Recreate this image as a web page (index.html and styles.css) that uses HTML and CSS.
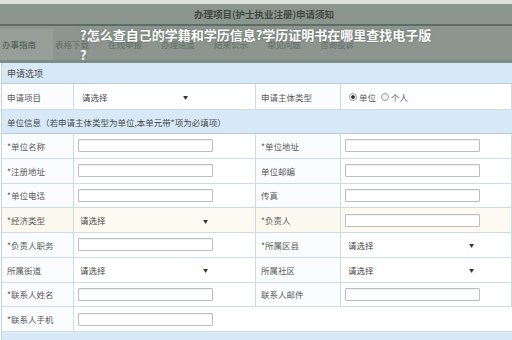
FILE: index.html
```html
<!DOCTYPE html>
<html lang="zh">

<head>
    <meta charset="UTF-8">
    <title>申请须知</title>
    <link rel="stylesheet" href="styles.css">
</head>

<body>
    <div class="page">
        <div class="top">
            <div class="top-strip"></div>
            <div class="top-title">办理项目(护士执业注册)申请须知</div>
            <div class="top-line"></div>
            <div class="tabs">
                <span class="tab tab-on">办事指南</span>
                <span class="tab">表格下载</span>
                <span class="tab">在线申报</span>
                <span class="tab">办理进度</span>
                <span class="tab">结果公示</span>
                <span class="tab">常见问题</span>
                <span class="tab">咨询投诉</span>
            </div>
            <div class="top-band"></div>
        </div>

        <h1 class="caption">?怎么查自己的学籍和学历信息?学历证明书在哪里查找电子版?</h1>

        <div class="form">
            <div class="section sec-1">申请选项</div>
            <div class="row row-tall">
                <div class="cell label">申请项目</div>
                <div class="cell"><div class="select select-s"><span>请选择</span><span class="arrow">▼</span></div></div>
                <div class="cell label">申请主体类型</div>
                <div class="cell radios">
                    <span class="radio radio-on"></span><span>单位</span>
                    <span class="radio"></span><span>个人</span>
                </div>
            </div>
            <div class="section sec-2">单位信息（若申请主体类型为单位,本单元带*项为必填项）</div>
            <div class="row">
                <div class="cell label">*单位名称</div>
                <div class="cell"><div class="input"></div></div>
                <div class="cell label">*单位地址</div>
                <div class="cell right"><div class="input"></div></div>
            </div>
            <div class="row">
                <div class="cell label">*注册地址</div>
                <div class="cell"><div class="input"></div></div>
                <div class="cell label">单位邮编</div>
                <div class="cell right"><div class="input"></div></div>
            </div>
            <div class="row">
                <div class="cell label">*单位电话</div>
                <div class="cell"><div class="input"></div></div>
                <div class="cell label">传真</div>
                <div class="cell right"><div class="input"></div></div>
            </div>
            <div class="row row-warm">
                <div class="cell label">*经济类型</div>
                <div class="cell"><div class="select"><span>请选择</span><span class="arrow">▼</span></div></div>
                <div class="cell label">*负责人</div>
                <div class="cell right"><div class="input"></div></div>
            </div>
            <div class="row">
                <div class="cell label">*负责人职务</div>
                <div class="cell"><div class="input"></div></div>
                <div class="cell label">*所属区县</div>
                <div class="cell right"><div class="select select-r"><span>请选择</span><span class="arrow">▼</span></div></div>
            </div>
            <div class="row">
                <div class="cell label">所属街道</div>
                <div class="cell"><div class="select"><span>请选择</span><span class="arrow">▼</span></div></div>
                <div class="cell label">所属社区</div>
                <div class="cell right"><div class="select select-r"><span>请选择</span><span class="arrow">▼</span></div></div>
            </div>
            <div class="row">
                <div class="cell label">*联系人姓名</div>
                <div class="cell"><div class="input"></div></div>
                <div class="cell label">联系人邮件</div>
                <div class="cell right"><div class="input"></div></div>
            </div>
            <div class="row row-last">
                <div class="cell label">*联系人手机</div>
                <div class="cell wide"><div class="input"></div></div>
            </div>
            <div class="section sec-3"></div>
        </div>
    </div>
</body>

</html>
```

FILE: styles.css
```css
body {
    margin: 0;
    font-family: "Noto Sans CJK SC", "Noto Sans", sans-serif;
    background-color: #ffffff;
}

.page {
    position: relative;
    width: 512px;
    height: 340px;
    overflow: hidden;
}

.top {
    height: 63px;
    background-color: #8c968f;
    display: flex;
    flex-direction: column;
}

.top-strip {
    height: 4px;
    background-color: #dde2dd;
}

.top-title {
    height: 20px;
    line-height: 20px;
    padding-left: 16px;
    text-align: center;
    font-size: 9.5px;
    font-weight: bold;
    color: #3e4943;
}

.top-line {
    height: 2px;
    background-color: #5f6b67;
}

.tabs {
    display: flex;
    margin-top: 3px;
    height: 31px;
}

.tab {
    width: 51px;
    padding-left: 2px;
    line-height: 31px;
    font-size: 8.5px;
    color: #626d67;
}

.tab-on {
    background-color: #959e97;
    color: #4a554f;
}

.top-band {
    height: 3px;
    background-color: #7f8b86;
}

.caption {
    position: absolute;
    left: 80px;
    top: 25px;
    width: 356px;
    margin: 0;
    font-size: 13px;
    line-height: 20px;
    font-weight: bold;
    color: #ffffff;
    line-break: anywhere;
    text-shadow: 0 0 2px rgba(60, 70, 65, 0.6);
}

/* form */
.form {
    margin-left: 1px;
    border-left: 1px solid #c4d2dc;
    font-size: 8.5px;
    color: #5a5a5a;
}

.section {
    background-color: #d7e8f7;
    border-bottom: 1px solid #bccbd8;
    padding-left: 5px;
    box-sizing: border-box;
    display: flex;
    align-items: center;
    color: #4a4a4a;
}

.sec-1 {
    height: 21px;
    font-size: 9px;
}

.sec-2 {
    height: 24px;
}

.sec-3 {
    height: 12px;
    border-top: 1px solid #e6eef5;
}

.row {
    display: grid;
    grid-template-columns: 72px 182px 85px 1fr;
    height: 24.75px;
    box-sizing: border-box;
    border-bottom: 1px solid #cfdbe4;
    background-color: #ffffff;
}

.row-tall {
    height: 26px;
}

.row-warm {
    background-color: #fdfaf2;
}

.row-last {
    grid-template-columns: 72px 1fr;
}

.cell {
    display: flex;
    align-items: center;
    padding-left: 4px;
    border-right: 1px solid #cfdbe4;
}

.cell.label {
    padding-left: 5px;
    background-color: #fafcfd;
}

.row-warm .cell.label {
    background-color: #fbf8f0;
}

.cell.wide {
    border-right: none;
}

.input {
    width: 135px;
    height: 13px;
    box-sizing: border-box;
    border: 1px solid #b9bec2;
    border-radius: 1px;
    background-color: #ffffff;
    box-shadow: inset 0 1px 1px rgba(0, 0, 0, 0.06);
}

.select {
    display: flex;
    justify-content: space-between;
    align-items: center;
    width: 128px;
    padding-left: 2px;
    color: #444444;
}

.select-s {
    width: 106px;
    padding-left: 4px;
}

.select-r {
    width: 126px;
    padding-left: 3px;
}

.arrow {
    font-size: 5px;
    color: #333333;
}

.radios {
    padding-left: 5px;
    gap: 2px;
}

.radio {
    width: 6px;
    height: 6px;
    border: 1px solid #9aa0a4;
    border-radius: 50%;
    background-color: #f2f4f5;
    margin-left: 3px;
}

.radio-on {
    background: radial-gradient(circle, #333333 0 1.5px, #f2f4f5 2px);
}
```
